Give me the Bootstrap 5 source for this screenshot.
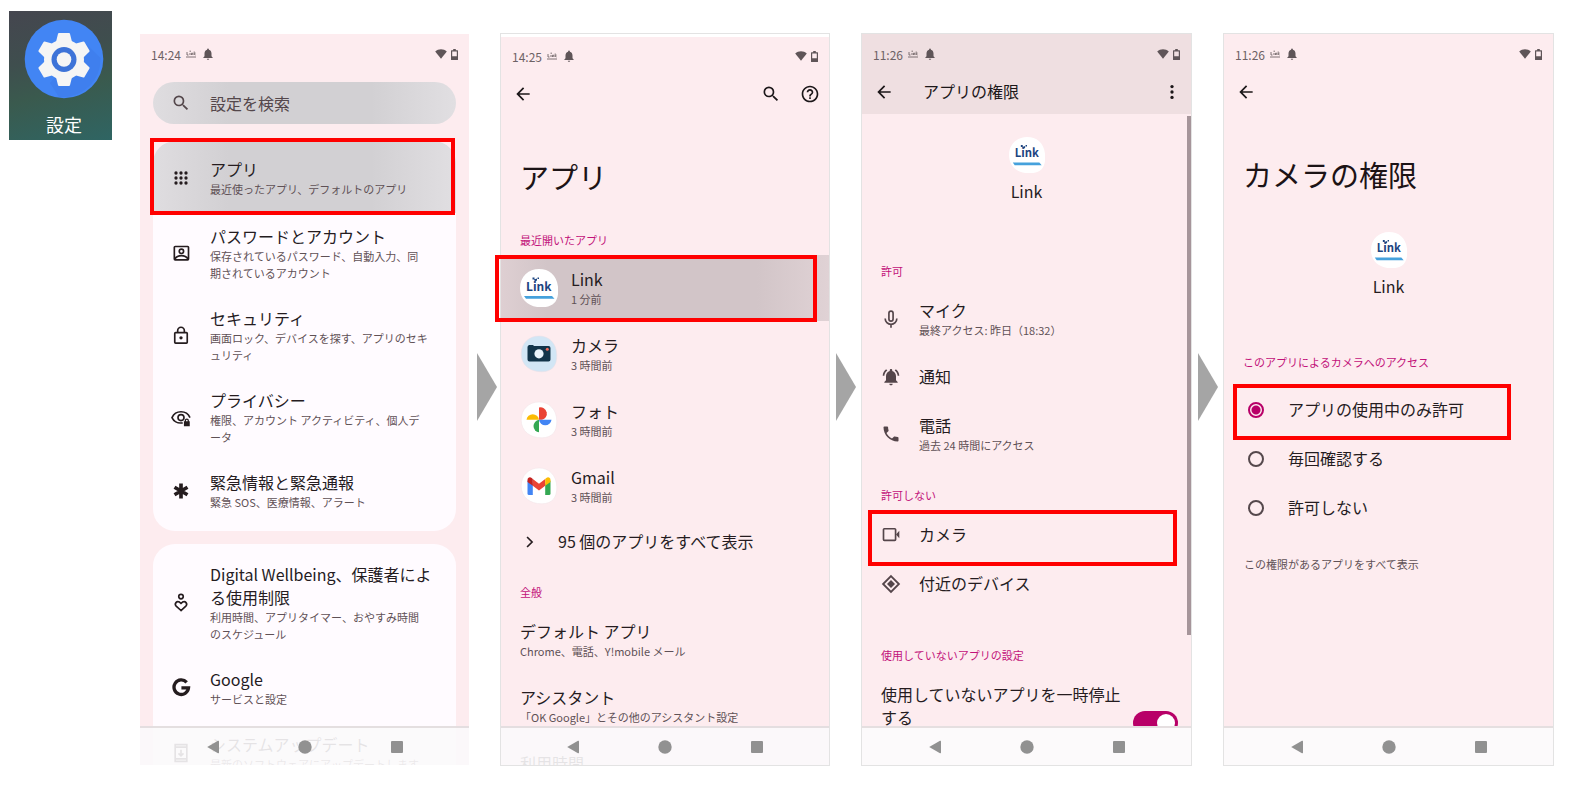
<!DOCTYPE html>
<html lang="ja">
<head>
<meta charset="utf-8">
<meta name="viewport" content="width=device-width, initial-scale=1">
<title>カメラの権限の設定手順</title>
<link rel="stylesheet" href="https://cdn.jsdelivr.net/npm/bootstrap@5.3.0/dist/css/bootstrap.min.css">
<style>
  :root { --pink:#fdecef; --ink:#251c1f; --sub:#5f5156; --accent:#c2127a; --magenta:#b80068; }
  body { font-family:"Noto Sans CJK JP","Noto Sans",sans-serif; color:var(--ink); background:#fff; font-size:16px; line-height:23px; }
  a { color:inherit; text-decoration:none; }
  button { border:0; background:none; padding:0; color:inherit; display:flex; }
  .ico { width:20px; height:20px; fill:currentColor; flex:none; display:block; }
  .steps { display:grid; grid-template-rows:minmax(0,1fr); grid-template-columns:103px 27px 331fr 30px 330fr 31px 331fr 31px 331fr; padding:11px 25px 22px 9px; height:100vh; min-height:500px; }
  .launcher { height:129px; background:linear-gradient(165deg,#45464f 0%,#3f4e4e 35%,#3a5a4e 60%,#2f6563 100%); color:#fff; font-size:18px; padding:8px 0 0 7px; }
  .launcher svg { width:80px; height:80px; }
  .launcher span { padding-top:14px; }
  .phone { position:relative; margin-top:22px; border:1px solid #e3e3e3; background:var(--pink); background-clip:padding-box; overflow:visible clip; min-width:0; }
  .phone.bare { border-color:transparent; }
  .phone.offset { border-top-color:#e3e3e3; box-shadow:inset 0 3px #fff; padding-top:2px; }
  .phone.offset .big { margin-bottom:16px; }
  .next { padding-top:342px; }
  .next svg { width:20px; height:68px; fill:#a5a5a5; }
  .status { height:40px; padding:0 11px; font-size:12px; color:#6d6265; }
  .status svg { fill:#5f5558; display:block; }
  .status .mini { margin-left:5px; }
  .status .alarm { width:14px; height:14px; margin-left:5px; }
  .bar { height:35px; padding:0 9px 0 12px; color:#1c1719; }
  .bar-title { padding-left:29px; }
  .bar .find { margin-right:19px; }
  .bar-area { background:#efdfe1; height:80px; }
  .big { font-size:29px; line-height:40px; font-weight:400; margin:45px 19px 14px; color:#1c1316; }
  .group { font-size:11px; line-height:17px; font-weight:400; color:var(--accent); margin:0; padding:20px 19px 6px; }
  .desc { display:block; font-size:11px; line-height:17px; color:var(--sub); }
  .ttl { display:block; }
  .search { height:42px; margin:8px 13px 17px; padding:0 18px; gap:19px; border-radius:21px; color:#54474b; }
  .search input { border:0; background:none; padding:0; font-size:16px; color:#54474b; min-width:0; outline:0; }
  .search input::placeholder { color:#54474b; opacity:1; }
  .pressed { background:linear-gradient(90deg,#dfdde0,#d2d0d3 25%,#d2d0d3 72%,#e1dfe2); }
  .panel { background:#fffbff; margin:0 13px 13px; border-radius:22px; padding-bottom:7px; }
  .panel .item { padding:12px 18px 13px; gap:19px; }
  .panel .item.first { padding:17px 18px 15px; border-radius:22px 22px 0 0; }
  .panel.lower { padding-top:7px; margin-bottom:0; }
  .item { display:flex; align-items:center; position:relative; }
  .line { min-height:66px; padding:13px 19px; gap:18px; }
  .line .ico { color:#54454a; }
  .line.one { min-height:49px; padding-top:0; padding-bottom:0; }
  .line.end { margin-bottom:19px; }
  .app { min-height:66px; padding:0 19px; gap:13px; }
  .app svg { width:38px; height:38px; flex:none; }
  .app.held { background:linear-gradient(90deg,#decfd2,#d2c5c8 14%,#d2c5c8 78%,#e0d2d5); }
  .more { height:45px; padding:0 19px; gap:18px; }
  .ring { position:absolute; border:4px solid #f00; pointer-events:none; z-index:2; }
  .ring-a { inset:-3px 1px -2px -3px; }
  .ring-b { inset:0 12px -1px -6px; }
  .ring-c { inset:0 14px -7px 6px; }
  .ring-d { inset:-1px 42px -6px 9px; }
  .softkeys { position:absolute; left:0; right:0; bottom:0; height:39px; border-top:2px solid rgba(210,200,203,.55); background:rgba(251,250,251,.9); z-index:1; }
  .softkeys.solid { background:#fcfafb; }
  .softkeys button { width:92px; justify-content:center; }
  .softkeys svg { width:14px; height:14px; fill:#919191; }
  .owner svg { width:36px; height:36px; }
  .owner span { padding-top:7px; }
  .owner.top-c { padding:23px 0 40px; }
  .owner.top-d { padding:24px 0 36px; }
  .thumb { position:absolute; right:0; top:82px; width:4px; height:71%; background:#a6959a; }
  .choice .form-check-input { width:16px; height:16px; margin:0; border:2px solid #55484c; background:none; box-shadow:none; flex:none; }
  .choice .form-check-input:checked { border-color:var(--magenta); background:radial-gradient(circle,var(--magenta) 0 4px,transparent 5px); }
  .choice { gap:24px; padding:0 24px; }
  .idle { padding-right:13px; gap:8px; }
  .idle .form-check-input { width:45px; height:24px; margin:0; border:0; background-color:var(--magenta); box-shadow:none; flex:none; }
  .idle .form-switch { padding:28px 0 0; }
  .idle .ttl { white-space:nowrap; }
</style>
</head>
<body>
<svg class="d-none" aria-hidden="true">
  <symbol id="i-search" viewBox="0 0 24 24"><path d="M15.5 14h-.79l-.28-.27A6.47 6.47 0 0 0 16 9.5 6.5 6.5 0 1 0 9.5 16c1.61 0 3.09-.59 4.23-1.57l.27.28v.79l5 4.99L20.49 19l-4.99-5zm-6 0C7.01 14 5 11.99 5 9.5S7.01 5 9.5 5 14 7.01 14 9.5 11.99 14 9.5 14z"/></symbol>
  <symbol id="i-back" viewBox="0 0 24 24"><path d="M20 11H7.83l5.59-5.59L12 4l-8 8 8 8 1.41-1.41L7.83 13H20v-2z"/></symbol>
  <symbol id="i-help" viewBox="0 0 24 24"><path d="M11 18h2v-2h-2v2zm1-16C6.48 2 2 6.48 2 12s4.48 10 10 10 10-4.48 10-10S17.52 2 12 2zm0 18c-4.41 0-8-3.59-8-8s3.59-8 8-8 8 3.59 8 8-3.59 8-8 8zm0-14c-2.21 0-4 1.79-4 4h2c0-1.1.9-2 2-2s2 .9 2 2c0 2-3 1.75-3 5h2c0-2.25 3-2.5 3-5 0-2.21-1.79-4-4-4z"/></symbol>
  <symbol id="i-dots" viewBox="0 0 24 24"><circle cx="12" cy="5.5" r="2"/><circle cx="12" cy="12" r="2"/><circle cx="12" cy="18.500" r="2"/></symbol>
  <symbol id="i-apps" viewBox="0 0 24 24"><g><circle cx="6" cy="6" r="2"/><circle cx="12" cy="6" r="2"/><circle cx="18" cy="6" r="2"/><circle cx="6" cy="12" r="2"/><circle cx="12" cy="12" r="2"/><circle cx="18" cy="12" r="2"/><circle cx="6" cy="18" r="2"/><circle cx="12" cy="18" r="2"/><circle cx="18" cy="18" r="2"/></g></symbol>
  <symbol id="i-account" viewBox="0 0 24 24"><g fill="none" stroke="currentColor" stroke-width="2"><rect x="4" y="3" width="17" height="16" rx="1"/><circle cx="12.500" cy="8.800" r="2.600"/><path d="M4.500 18c2-3 5-4 8-4s6 1 8 4"/></g></symbol>
  <symbol id="i-lock" viewBox="0 0 24 24"><g fill="none" stroke="currentColor" stroke-width="2"><rect x="4.500" y="8" width="15" height="12.500" rx="1"/><path d="M8 8V5.500a4 4 0 0 1 8 0V8"/></g><circle cx="12" cy="14.200" r="2"/></symbol>
  <symbol id="i-eye" viewBox="0 0 24 24"><g fill="none" stroke="currentColor" stroke-width="2"><path d="M14 17.800C7.500 19 3 15.500 1.200 11.500 3 7.500 7 4.500 12 4.500s9 3 10.800 7"/><circle cx="12" cy="11.500" r="3.600"/></g><path d="M16.500 16v-1a2.500 2.500 0 0 1 5 0v1h1v6h-7v-6zm1.500 0h2v-1a1 1 0 0 0-2 0z"/></symbol>
  <symbol id="i-star" viewBox="0 0 24 24"><path fill="none" stroke="currentColor" stroke-width="4.400" d="M12 3v18M4.200 7.500l15.600 9M19.800 7.500l-15.600 9"/></symbol>
  <symbol id="i-well" viewBox="0 0 24 24"><g fill="none" stroke="currentColor" stroke-width="2"><circle cx="12" cy="4.300" r="2.700"/><path d="M12 21l-5.800-5.300c-2.600-2.700.6-6.800 4-4.800l1.800 1.600 1.800-1.600c3.400-2 6.600 2.100 4 4.800z"/></g></symbol>
  <symbol id="i-google" viewBox="0 0 24 24"><path fill="none" stroke="currentColor" stroke-width="4" d="M18.800 5.200A8.700 8.700 0 1 0 21 11.900h-8.500"/></symbol>
  <symbol id="i-update" viewBox="0 0 24 24"><path fill="none" stroke="currentColor" stroke-width="2" d="M5 2h14v20H5zM5 5h14M5 19h14M12 8v7M9 12.500l3 3 3-3"/></symbol>
  <symbol id="i-mic" viewBox="0 0 24 24"><g fill="none" stroke="currentColor" stroke-width="2"><rect x="9.500" y="2.500" width="5" height="12" rx="2.500"/><path d="M5 11.500a7 7 0 0 0 14 0M12 18v4.500"/></g></symbol>
  <symbol id="i-bell" viewBox="0 0 24 24"><path d="M12 22c1.100 0 2-.9 2-2h-4c0 1.100.89 2 2 2zm6-6v-5c0-3.070-1.640-5.640-4.500-6.320V4c0-.83-.67-1.500-1.500-1.500s-1.500.67-1.500 1.500v.68C7.630 5.360 6 7.920 6 11v5l-2 2v1h16v-1l-2-2z"/></symbol>
  <symbol id="i-ring" viewBox="0 0 24 24"><use href="#i-bell"/><path d="M7.580 4.080L6.150 2.650C3.750 4.480 2.170 7.300 2.030 10.500h2c.15-2.650 1.510-4.970 3.550-6.420zm12.390 6.420h2c-.15-3.200-1.730-6.020-4.120-7.850l-1.420 1.430c2.020 1.450 3.390 3.770 3.540 6.420z"/></symbol>
  <symbol id="i-phone" viewBox="0 0 24 24"><path d="M6.620 10.790c1.440 2.830 3.760 5.140 6.590 6.590l2.200-2.200c.27-.27.67-.36 1.020-.24 1.120.37 2.330.57 3.570.57.55 0 1 .45 1 1V20c0 .55-.45 1-1 1-9.390 0-17-7.610-17-17 0-.55.45-1 1-1h3.500c.55 0 1 .45 1 1 0 1.250.2 2.450.57 3.570.11.35.03.74-.25 1.020l-2.200 2.200z"/></symbol>
  <symbol id="i-video" viewBox="0 0 24 24"><rect x="3" y="4.500" width="14.500" height="14" rx="1" fill="none" stroke="currentColor" stroke-width="2"/><path d="M18 11.500l4-4.500v9z"/></symbol>
  <symbol id="i-near" viewBox="0 0 24 24"><path fill="none" stroke="currentColor" stroke-width="2.200" d="M12 2.500l9.500 9.500-9.500 9.500L2.500 12z"/><path d="M12 7.200l4.800 4.800-4.800 4.800L7.200 12z"/></symbol>
  <symbol id="i-chev" viewBox="0 0 24 24"><path fill="none" stroke="currentColor" stroke-width="2" d="M8.500 6l6 6-6 6"/></symbol>
  <symbol id="s-mini" viewBox="0 0 10 8"><path d="M0 7h10M1 2v3h1.500M4 3v2M5.500 5V3.200h1.300V5M8.200 1.500V5M9.600 3L8.500 4l1.100 1M3.500 1.200h1.500" fill="none" stroke="#6f6467" stroke-width=".9"/></symbol>
  <symbol id="s-wifi" viewBox="0 0 12 10"><path d="M6 9.700L.2 2.600C3.500-.4 8.500-.4 11.800 2.600z"/></symbol>
  <symbol id="s-batt" viewBox="0 0 7 11"><path d="M2.200 0h2.600v1.200H6.500q.5 0 .5.500v8.800q0 .5-.5.500h-6q-.5 0-.5-.5V1.700q0-.5.5-.5h1.700zM1.200 2.400v4.800h4.600V2.400z" fill-rule="evenodd"/></symbol>
  <symbol id="k-back" viewBox="0 0 14 14"><path d="M1.200 7L12 .8q1-.4 1 .6v11.200q0 1-1 .6z"/></symbol>
  <symbol id="k-home" viewBox="0 0 14 14"><circle cx="7" cy="7" r="6.700"/></symbol>
  <symbol id="k-recent" viewBox="0 0 14 14"><rect x="1" y="1" width="12" height="12" rx="1"/></symbol>
  <symbol id="a-link" viewBox="0 0 38 38"><path fill="#fff" d="M19 0C30 0 38 7 38.200 21 38.400 33 33 38 22 38.300 9 38.500 0 31 0 19S9 0 19 0z"/><text x="6" y="21.500" font-family="Noto Sans CJK JP, sans-serif" font-size="12" font-weight="700" fill="#1c4480">Link</text><path fill="#1c4480" d="M12.500 8.500h2v2h-2zM17.500 8.500h1.500v1.500h-1.500zM14 10.500l3-1v2l-2 1z"/><path fill="#45a1dc" d="M4 27h28l2.500 2.800H6z"/></symbol>
  <symbol id="a-camera" viewBox="0 0 38 38"><path fill="#d2e6f5" stroke="#eadfe5" stroke-width=".5" d="M19 1C29 1 36.500 8 36.800 20 37 31 32 36.500 22 36.800 10 37 1.200 30 1.200 19S9 1 19 1z"/><path fill="#12344a" d="M9 10h4l1 1h14.500q2 0 2 2v11.500q0 2-2 2H9.500q-2 0-2-2V12q0-1 1.500-2z"/><circle cx="19" cy="18.800" r="4.600" fill="#e9f3fb"/><circle cx="27.300" cy="14.200" r="1.500" fill="#f06a5a"/></symbol>
  <symbol id="a-photos" viewBox="0 0 38 38"><path fill="#fff" stroke="#f0e2e6" stroke-width=".5" d="M19 1C29 1 36.500 8 36.800 20 37 31 32 36.500 22 36.800 10 37 1.200 30 1.200 19S9 1 19 1z"/><path fill="#ea4335" d="M19 6.500a6.300 6.300 0 0 1 3 12.300H19z"/><path fill="#4285f4" d="M31.500 18.800a6.300 6.300 0 0 1-12.500 0z"/><path fill="#34a853" d="M19 31.300a6.300 6.300 0 0 1 0-12.500z"/><path fill="#fbbc04" d="M6.500 18.800a6.300 6.300 0 0 1 12.500 0z"/></symbol>
  <symbol id="a-gmail" viewBox="0 0 38 38"><path fill="#fff" stroke="#f0e2e6" stroke-width=".5" d="M19 1C29 1 36.500 8 36.800 20 37 31 32 36.500 22 36.800 10 37 1.200 30 1.200 19S9 1 19 1z"/><path fill="#4285f4" d="M7.500 13.500l5.300 3.500v11H9q-1.500 0-1.500-1.500z"/><path fill="#34a853" d="M30.500 13.500L25.200 17v11H29q1.500 0 1.500-1.500z"/><path fill="#ea4335" d="M12.800 12l6.200 4.800 6.200-4.800v6.800L19 23.500l-6.200-4.700z"/><path fill="#c5221f" d="M12.800 12v6.800L7.500 15v-2c0-2.500 2.500-3.500 4.200-2z"/><path fill="#fbbc04" d="M25.200 12v6.800l5.300-3.800v-2c0-2.500-2.500-3.500-4.200-2z"/></symbol>
</svg>

<main class="steps">
  <div class="launcher d-flex flex-column align-items-center">
    <svg viewBox="0 0 80 80"><circle cx="40" cy="40" r="39.300" fill="#4285f4"/><path fill="#3f7fee" d="M62 25l14.500 14A38 38 0 0 1 35 78L26 64z"/>
      <g fill="#f5f5f5" stroke="#f5f5f5" stroke-width="2" stroke-linejoin="round"><circle cx="40" cy="40.500" r="19"/><path id="tooth" d="M35 15h10l2.500 10h-15z"/><use href="#tooth" transform="rotate(60 40 40.500)"/><use href="#tooth" transform="rotate(120 40 40.500)"/><use href="#tooth" transform="rotate(180 40 40.500)"/><use href="#tooth" transform="rotate(240 40 40.500)"/><use href="#tooth" transform="rotate(300 40 40.500)"/></g><circle cx="40" cy="40.500" r="12.500" fill="#3d73d8"/><circle cx="40" cy="40.500" r="7.300" fill="#f5f5f5"/></svg>
    <span>設定</span>
  </div>
  <div></div>

  <section class="phone bare">
    <div class="status d-flex align-items-center"><span>14:24</span><svg class="mini" width="10" height="8"><use href="#s-mini"/></svg><svg class="alarm"><use href="#i-bell"/></svg><svg class="ms-auto me-1" width="12" height="10"><use href="#s-wifi"/></svg><svg width="7" height="11"><use href="#s-batt"/></svg></div>
    <label class="search pressed d-flex align-items-center"><svg class="ico"><use href="#i-search"/></svg><input type="text" class="flex-fill" placeholder="設定を検索" aria-label="設定を検索"></label>
    <div class="panel">
      <a href="#" class="item first pressed"><svg class="ico"><use href="#i-apps"/></svg><span><span class="ttl">アプリ</span><span class="desc">最近使ったアプリ、デフォルトのアプリ</span></span><span class="ring ring-a"></span></a>
      <a href="#" class="item"><svg class="ico"><use href="#i-account"/></svg><span><span class="ttl">パスワードとアカウント</span><span class="desc">保存されているパスワード、自動入力、同<br>期されているアカウント</span></span></a>
      <a href="#" class="item"><svg class="ico"><use href="#i-lock"/></svg><span><span class="ttl">セキュリティ</span><span class="desc">画面ロック、デバイスを探す、アプリのセキ<br>ュリティ</span></span></a>
      <a href="#" class="item"><svg class="ico"><use href="#i-eye"/></svg><span><span class="ttl">プライバシー</span><span class="desc">権限、アカウント アクティビティ、個人デ<br>ータ</span></span></a>
      <a href="#" class="item"><svg class="ico"><use href="#i-star"/></svg><span><span class="ttl">緊急情報と緊急通報</span><span class="desc">緊急 SOS、医療情報、アラート</span></span></a>
    </div>
    <div class="panel lower">
      <a href="#" class="item"><svg class="ico"><use href="#i-well"/></svg><span><span class="ttl">Digital Wellbeing、保護者によ<br>る使用制限</span><span class="desc">利用時間、アプリタイマー、おやすみ時間<br>のスケジュール</span></span></a>
      <a href="#" class="item"><svg class="ico"><use href="#i-google"/></svg><span><span class="ttl">Google</span><span class="desc">サービスと設定</span></span></a>
      <a href="#" class="item"><svg class="ico"><use href="#i-update"/></svg><span><span class="ttl">システムアップデート</span><span class="desc">最新のソフトウェアにアップデートします</span></span></a>
    </div>
    <nav class="softkeys d-flex justify-content-center align-items-center"><button type="button" aria-label="戻る"><svg><use href="#k-back"/></svg></button><button type="button" aria-label="ホーム"><svg><use href="#k-home"/></svg></button><button type="button" aria-label="履歴"><svg><use href="#k-recent"/></svg></button></nav>
  </section>
  <div class="next d-flex justify-content-center align-items-start ps-1"><svg viewBox="0 0 20 68"><path d="M0 0l20 34L0 68z"/></svg></div>

  <section class="phone offset">
    <div class="status d-flex align-items-center"><span>14:25</span><svg class="mini" width="10" height="8"><use href="#s-mini"/></svg><svg class="alarm"><use href="#i-bell"/></svg><svg class="ms-auto me-1" width="12" height="10"><use href="#s-wifi"/></svg><svg width="7" height="11"><use href="#s-batt"/></svg></div>
    <div class="bar d-flex align-items-center"><button type="button" aria-label="戻る"><svg class="ico"><use href="#i-back"/></svg></button><button type="button" class="find ms-auto" aria-label="検索"><svg class="ico"><use href="#i-search"/></svg></button><button type="button" aria-label="ヘルプ"><svg class="ico"><use href="#i-help"/></svg></button></div>
    <h1 class="big">アプリ</h1>
    <h2 class="group">最近開いたアプリ</h2>
    <a href="#" class="item app held"><svg><use href="#a-link"/></svg><span><span class="ttl">Link</span><span class="desc">1 分前</span></span><span class="ring ring-b"></span></a>
    <a href="#" class="item app"><svg><use href="#a-camera"/></svg><span><span class="ttl">カメラ</span><span class="desc">3 時間前</span></span></a>
    <a href="#" class="item app"><svg><use href="#a-photos"/></svg><span><span class="ttl">フォト</span><span class="desc">3 時間前</span></span></a>
    <a href="#" class="item app"><svg><use href="#a-gmail"/></svg><span><span class="ttl">Gmail</span><span class="desc">3 時間前</span></span></a>
    <a href="#" class="item more"><svg class="ico"><use href="#i-chev"/></svg><span>95 個のアプリをすべて表示</span></a>
    <h2 class="group">全般</h2>
    <a href="#" class="item line"><span><span class="ttl">デフォルト アプリ</span><span class="desc">Chrome、電話、Y!mobile メール</span></span></a>
    <a href="#" class="item line"><span><span class="ttl">アシスタント</span><span class="desc">「OK Google」とその他のアシスタント設定</span></span></a>
    <a href="#" class="item line align-items-start"><span class="ttl">利用時間</span></a>
    <nav class="softkeys d-flex justify-content-center align-items-center"><button type="button" aria-label="戻る"><svg><use href="#k-back"/></svg></button><button type="button" aria-label="ホーム"><svg><use href="#k-home"/></svg></button><button type="button" aria-label="履歴"><svg><use href="#k-recent"/></svg></button></nav>
  </section>
  <div class="next d-flex justify-content-center align-items-start"><svg viewBox="0 0 20 68"><path d="M0 0l20 34L0 68z"/></svg></div>

  <section class="phone">
    <div class="bar-area">
      <div class="status d-flex align-items-center"><span>11:26</span><svg class="mini" width="10" height="8"><use href="#s-mini"/></svg><svg class="alarm"><use href="#i-bell"/></svg><svg class="ms-auto me-1" width="12" height="10"><use href="#s-wifi"/></svg><svg width="7" height="11"><use href="#s-batt"/></svg></div>
      <div class="bar d-flex align-items-center"><button type="button" aria-label="戻る"><svg class="ico"><use href="#i-back"/></svg></button><span class="bar-title">アプリの権限</span><button type="button" class="ms-auto" aria-label="その他"><svg class="ico"><use href="#i-dots"/></svg></button></div>
    </div>
    <div class="thumb"></div>
    <div class="owner top-c d-flex flex-column align-items-center"><svg><use href="#a-link"/></svg><span>Link</span></div>
    <h2 class="group">許可</h2>
    <a href="#" class="item line"><svg class="ico"><use href="#i-mic"/></svg><span><span class="ttl">マイク</span><span class="desc">最終アクセス: 昨日（18:32）</span></span></a>
    <a href="#" class="item line one"><svg class="ico"><use href="#i-ring"/></svg><span>通知</span></a>
    <a href="#" class="item line"><svg class="ico"><use href="#i-phone"/></svg><span><span class="ttl">電話</span><span class="desc">過去 24 時間にアクセス</span></span></a>
    <h2 class="group">許可しない</h2>
    <a href="#" class="item line one"><svg class="ico"><use href="#i-video"/></svg><span>カメラ</span><span class="ring ring-c"></span></a>
    <a href="#" class="item line one end"><svg class="ico"><use href="#i-near"/></svg><span>付近のデバイス</span></a>
    <h2 class="group">使用していないアプリの設定</h2>
    <div class="item line idle justify-content-between align-items-start"><label class="ttl" for="pause">使用していないアプリを一時停止<br>する</label><div class="form-switch"><input class="form-check-input float-none d-block" type="checkbox" role="switch" id="pause" checked></div></div>
    <nav class="softkeys solid d-flex justify-content-center align-items-center"><button type="button" aria-label="戻る"><svg><use href="#k-back"/></svg></button><button type="button" aria-label="ホーム"><svg><use href="#k-home"/></svg></button><button type="button" aria-label="履歴"><svg><use href="#k-recent"/></svg></button></nav>
  </section>
  <div class="next d-flex justify-content-center align-items-start"><svg viewBox="0 0 20 68"><path d="M0 0l20 34L0 68z"/></svg></div>

  <section class="phone">
    <div class="status d-flex align-items-center"><span>11:26</span><svg class="mini" width="10" height="8"><use href="#s-mini"/></svg><svg class="alarm"><use href="#i-bell"/></svg><svg class="ms-auto me-1" width="12" height="10"><use href="#s-wifi"/></svg><svg width="7" height="11"><use href="#s-batt"/></svg></div>
    <div class="bar d-flex align-items-center"><button type="button" aria-label="戻る"><svg class="ico"><use href="#i-back"/></svg></button></div>
    <h1 class="big">カメラの権限</h1>
    <div class="owner top-d d-flex flex-column align-items-center"><svg><use href="#a-link"/></svg><span>Link</span></div>
    <h2 class="group mb-2">このアプリによるカメラへのアクセス</h2>
    <div class="item line one choice"><input class="form-check-input" type="radio" name="cam" id="cam1" checked><label for="cam1">アプリの使用中のみ許可</label><span class="ring ring-d"></span></div>
    <div class="item line one choice"><input class="form-check-input" type="radio" name="cam" id="cam2"><label for="cam2">毎回確認する</label></div>
    <div class="item line one choice"><input class="form-check-input" type="radio" name="cam" id="cam3"><label for="cam3">許可しない</label></div>
    <a href="#" class="desc px-3 pt-4 ms-1">この権限があるアプリをすべて表示</a>
    <nav class="softkeys solid d-flex justify-content-center align-items-center"><button type="button" aria-label="戻る"><svg><use href="#k-back"/></svg></button><button type="button" aria-label="ホーム"><svg><use href="#k-home"/></svg></button><button type="button" aria-label="履歴"><svg><use href="#k-recent"/></svg></button></nav>
  </section>
</main>
<script src="https://cdn.jsdelivr.net/npm/bootstrap@5.3.0/dist/js/bootstrap.bundle.min.js"></script>
</body>
</html>
